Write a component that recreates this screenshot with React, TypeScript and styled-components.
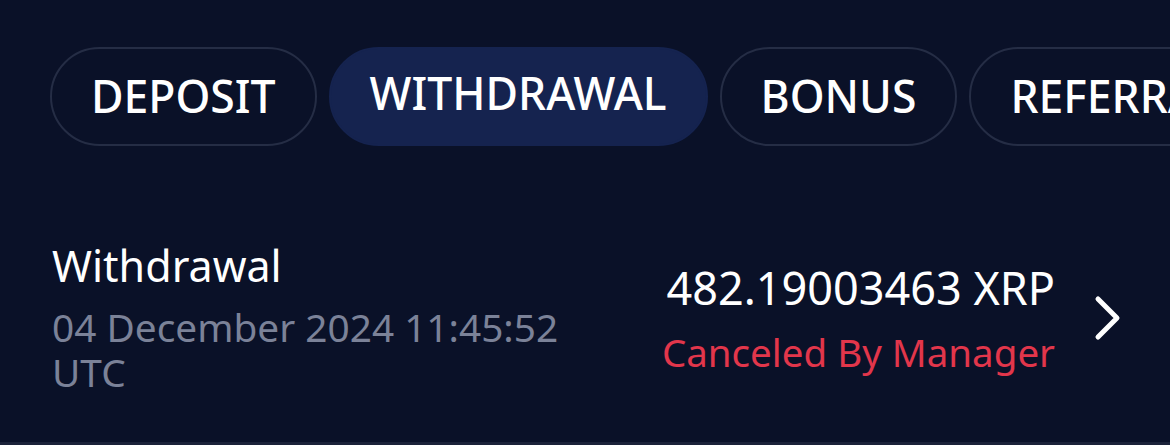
import React from "react";
import styled, { createGlobalStyle } from "styled-components";

const GlobalStyle = createGlobalStyle`
  html, body {
    margin: 0;
    padding: 0;
    background: #0a1128;
  }
  body {
    font-family: "Noto Sans", "Open Sans", sans-serif;
    color: #ffffff;
  }
`;

const Page = styled.div`
  width: 1170px;
  height: 445px;
  background: #0a1128;
  overflow: hidden;
  display: flex;
  flex-direction: column;
`;

const Tabs = styled.nav`
  display: flex;
  gap: 12px;
  padding: 47px 0 0 50px;
  white-space: nowrap;
`;

const Tab = styled.button<{ $active?: boolean }>`
  flex: none;
  height: 99px;
  padding: 0 39px;
  border-radius: 50px;
  border: 2px solid ${(p) => (p.$active ? "#15234f" : "#252d45")};
  background: ${(p) => (p.$active ? "#15234f" : "transparent")};
  color: #ffffff;
  font-family: "Noto Sans", sans-serif;
  font-size: 44.5px;
  font-weight: 500;
  line-height: 1;
  padding-bottom: ${(p) => (p.$active ? "6px" : "0")};
`;

const Row = styled.div`
  flex: 1;
  display: flex;
  align-items: flex-start;
  padding: 0 46px 0 52px;
  margin-top: 94px;
  border-bottom: 3px solid #1b2239;
`;

const Info = styled.div`
  flex: 1;
  display: flex;
  flex-direction: column;
`;

const Title = styled.div`
  font-size: 43px;
  line-height: 52px;
  margin-bottom: 13px;
  color: #ffffff;
`;

const Date = styled.div`
  width: 560px;
  font-size: 38.8px;
  line-height: 45px;
  color: #7b8298;
`;

const Amount = styled.div`
  display: flex;
  flex-direction: column;
  align-items: flex-end;
  padding-top: 20px;
`;

const Value = styled.div`
  font-size: 45px;
  line-height: 56px;
  color: #ffffff;
`;

const Status = styled.div`
  font-size: 38.5px;
  line-height: 56px;
  margin-top: 8px;
  color: #e2364b;
`;

const Chevron = styled.svg`
  flex: none;
  margin: 54px 0 0 37px;
`;

export default function App() {
  return (
    <Page>
      <GlobalStyle />
      <Tabs>
        <Tab>DEPOSIT</Tab>
        <Tab $active>WITHDRAWAL</Tab>
        <Tab>BONUS</Tab>
        <Tab>REFERRALS</Tab>
      </Tabs>
      <Row>
        <Info>
          <Title>Withdrawal</Title>
          <Date>04 December 2024 11:45:52 UTC</Date>
        </Info>
        <Amount>
          <Value>482.19003463 XRP</Value>
          <Status>Canceled By Manager</Status>
        </Amount>
        <Chevron width="32" height="48" viewBox="0 0 32 48">
          <path
            d="M6 5 L25 24 L6 43"
            fill="none"
            stroke="#ffffff"
            strokeWidth="5"
            strokeLinecap="round"
            strokeLinejoin="round"
          />
        </Chevron>
      </Row>
    </Page>
  );
}
